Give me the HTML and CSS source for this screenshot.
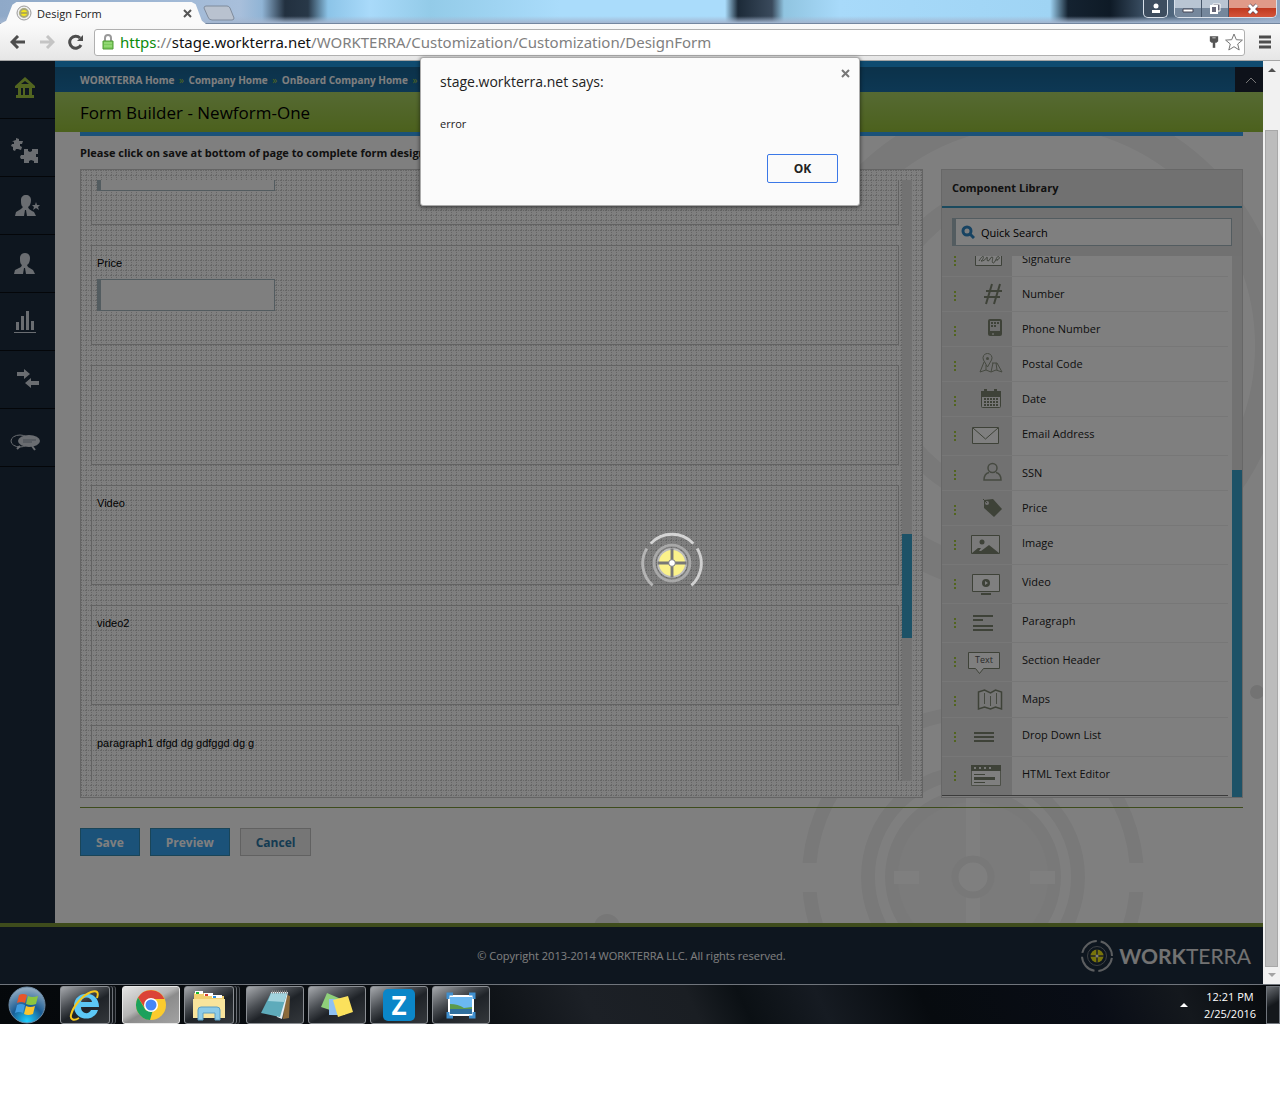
FILE: index.html
```html
<!DOCTYPE html>
<html lang="en">
<head>
    <meta charset="UTF-8">
    <meta name="viewport" content="width=device-width, initial-scale=1.0">
    <title>Design Form</title>
    <link rel="stylesheet" href="styles.css">
</head>
<body>
    <!-- Browser title bar -->
    <div class="titlebar">
        <div class="tab">
            <svg class="favicon" width="16" height="16" viewBox="0 0 16 16">
                <circle cx="8" cy="8" r="7" fill="#eee" stroke="#999" />
                <circle cx="8" cy="8" r="4" fill="#f4e61c" stroke="#a8a87a" stroke-width="2" />
                <path d="M5 8h6" stroke="#777" stroke-width="1" />
            </svg>
            <span class="tab-title">Design Form</span>
            <button class="tab-close" aria-label="Close tab">
                <svg width="9" height="9" viewBox="0 0 9 9"><path d="M1 1l7 7M8 1l-7 7" stroke="#555" stroke-width="2" /></svg>
            </button>
        </div>
        <button class="new-tab" aria-label="New tab">
            <svg width="32" height="16" viewBox="0 0 32 16"><path d="M3 1h21q2 0 3 2l4 10q0 2-2 2H9q-3 0-4-3L1 3q0-2 2-2z" fill="#b9c2cf" stroke="#7f8b9c" /></svg>
        </button>
        <div class="window-buttons">
            <button class="win-btn user" aria-label="User">
                <svg width="12" height="12" viewBox="0 0 12 12"><circle cx="6" cy="3" r="2.5" fill="#fff" /><path d="M2 7h8v3H2z" fill="#fff" /></svg>
            </button>
            <div class="win-group">
                <button class="win-btn" aria-label="Minimize">
                    <svg width="12" height="10" viewBox="0 0 12 10"><path d="M1 5h10v3H1z" fill="#fff" stroke="#445" /></svg>
                </button>
                <button class="win-btn" aria-label="Restore">
                    <svg width="12" height="12" viewBox="0 0 12 12"><path d="M4 1h7v7H4z" fill="#667" stroke="#fff" /><path d="M2 3h6v7H2z" fill="#667" stroke="#fff" stroke-width="2" /></svg>
                </button>
                <button class="win-btn close" aria-label="Close">
                    <svg width="12" height="12" viewBox="0 0 12 12"><path d="M2 2l8 8M10 2l-8 8" stroke="#545" stroke-width="4" /><path d="M2 2l8 8M10 2l-8 8" stroke="#fff" stroke-width="3" /></svg>
                </button>
            </div>
        </div>
    </div>

    <!-- Address bar -->
    <div class="toolbar">
        <button class="tool" aria-label="Back">
            <svg width="16" height="14" viewBox="0 0 16 14"><path d="M15 7H3M8 1L2 7l6 6" fill="none" stroke="#4d4d4d" stroke-width="3" /></svg>
        </button>
        <button class="tool" aria-label="Forward">
            <svg width="16" height="14" viewBox="0 0 16 14"><path d="M1 7h12M8 1l6 6-6 6" fill="none" stroke="#c4c4c4" stroke-width="3" /></svg>
        </button>
        <button class="tool" aria-label="Reload">
            <svg width="16" height="16" viewBox="0 0 16 16"><path d="M13 11a6 6 0 1 1-1-7" fill="none" stroke="#4d4d4d" stroke-width="3" /><path d="M15 1v6H9z" fill="#4d4d4d" /></svg>
        </button>
        <div class="address" role="textbox" aria-label="Address">
            <svg width="12" height="16" viewBox="0 0 12 16"><path d="M3 7V4a3 3 0 0 1 6 0v3" fill="none" stroke="#999" stroke-width="2" /><path d="M1 7h10v8H1z" fill="#7ccb5c" stroke="#4f9a35" /><path d="M2 9h8M2 12h8" stroke="#a5e38a" /></svg>
            <span class="url"><span class="scheme">https</span>://<span class="host">stage.workterra.net</span>/WORKTERRA/Customization/Customization/DesignForm</span>
            <svg width="10" height="14" viewBox="0 0 12 16"><path d="M1 1h10v6l-2 2H3L1 7z" fill="#555" /><path d="M4 3h4" stroke="#ddd" /><path d="M6 8v7" stroke="#555" stroke-width="3" /></svg>
            <svg width="18" height="18" viewBox="0 0 18 18"><path d="M9 1l2.300 5.700 6.100.4-4.700 3.900 1.500 6L9 13.700 3.800 17l1.500-6L.6 7.100l6.100-.4z" fill="#fff" stroke="#777" /></svg>
        </div>
        <button class="tool" aria-label="Menu">
            <svg width="14" height="14" viewBox="0 0 14 14"><path d="M1 2h12M1 7h12M1 12h12" stroke="#4d4d4d" stroke-width="3" /></svg>
        </button>
    </div>

    <div class="viewport">
        <div class="page">
            <div class="layout">
                <nav class="sidebar">
                    <a href="#" aria-label="Home">
                        <svg width="32" height="32" viewBox="0 0 32 32"><path d="M16 3L6 12v2h3v7H7v3h18v-3h-2v-7h3v-2z" fill="#a4cb40" /><path d="M12 14h2v7h-2zM16 14h4v7h-4z" fill="#1c2c3e" /><path d="M12 10l4-3 4 3z" fill="#1c2c3e" /></svg>
                    </a>
                    <a href="#" aria-label="Modules">
                        <svg width="32" height="32" viewBox="0 0 32 32" fill="#d5dbe3"><g transform="translate(0 4)"><path d="M4 5l3-1 0-2 3 1v2l4 0-1 3-2 0 0 2 2 1-1 3-3-1-2 0-1 2-2-1 0-3-2-1 1-2 2 0 0-2-2-1z" /><path d="M15 13h4l0 2 2 1 2-1 0-2h6v5l-2 0v3l2 0v6h-4l0-2-3-1-2 1 0 2h-5v-4l-3 0-1-2 1-2 3 0z" /></g></svg>
                    </a>
                    <a href="#" aria-label="Featured employee">
                        <svg width="32" height="32" viewBox="0 0 32 32" fill="#d5dbe3"><path d="M17 5c3 0 5 2 5 5s-1 6-3 7l1 2 3 2 2 1 2 4H6l1-4 5-3 2-2c-2-1-2-4-2-7s2-5 5-5z" /><path d="M27 12l1 3 3 0-2 2 1 3-3-2-3 2 1-3-2-2 3 0z" /><path d="M16 20l-1 6h3l-1-6z" fill="#1c2c3e" /></svg>
                    </a>
                    <a href="#" aria-label="Employee">
                        <svg width="32" height="32" viewBox="0 0 32 32" fill="#d5dbe3"><path d="M16 5c3 0 5 2 5 5s-1 6-3 7l1 2 5 3 2 4H5l1-4 6-3 1-2c-2-1-2-4-2-7s2-5 5-5z" /><path d="M15 20l-1 6h3l-1-6z" fill="#1c2c3e" /></svg>
                    </a>
                    <a href="#" aria-label="Reports">
                        <svg width="32" height="32" viewBox="0 0 32 32" fill="#d5dbe3"><path d="M7 16h3v8H7zM12 10h3v14h-3zM17 5h3v19h-3zM22 15h3v9h-3zM5 26h22v1H5z" /></svg>
                    </a>
                    <a href="#" aria-label="Transfer">
                        <svg width="32" height="32" viewBox="0 0 32 32" fill="#d5dbe3"><path d="M8 8h7V5l6 5-6 5v-3H8zM30 17h-8v-3l-6 5 6 5v-3h8z" /></svg>
                    </a>
                    <a href="#" aria-label="Chat">
                        <svg width="32" height="32" viewBox="0 0 32 32"><ellipse cx="11" cy="19" rx="9" ry="6" fill="none" stroke="#d5dbe3" /><path d="M11 24l-3 3M23 24l3 4" stroke="#d5dbe3" stroke-width="2" /><ellipse cx="20" cy="19" rx="11" ry="6" fill="#d5dbe3" /><path d="M14 18h13M14 20h9" stroke="#8d98a5" /></svg>
                    </a>
                </nav>

                <main class="main">
                    <svg class="watermark" viewBox="0 0 1208 862" preserveAspectRatio="xMaxYMin slice">
                        <g fill="none" stroke="#f3f3f3">
                            <circle cx="980" cy="285" r="236" stroke-width="32" />
                            <circle cx="980" cy="285" r="160" stroke-width="20" />
                            <circle cx="918" cy="816" r="164" stroke-width="14" />
                            <circle cx="918" cy="816" r="105" stroke-width="14" />
                            <circle cx="918" cy="816" r="81" stroke-width="14" />
                        </g>
                        <circle cx="918" cy="816" r="75" fill="#f6f6f6" />
                        <path d="M911 735h14v127h-14zM740 802h25v29h-25zM1070 802h25v29h-25zM839 810h25v13h-25zM975 810h25v13h-25z" fill="#fff" />
                        <circle cx="918" cy="816" r="18" fill="#fff" stroke="#f0f0f0" stroke-width="7" />
                        <circle cx="552" cy="866" r="13" fill="#eee" />
                        <circle cx="1202" cy="631" r="7" fill="#e6e6e6" />
                    </svg>

                    <div class="breadcrumb-bar">
                        <div class="breadcrumb">
                            <a href="#">WORKTERRA Home</a><span>»</span>
                            <a href="#">Company Home</a><span>»</span>
                            <a href="#">OnBoard Company Home</a><span>»</span>
                            <a href="#">Form Builder</a>
                        </div>
                        <button class="collapse" aria-label="Collapse header">
                            <svg width="12" height="8" viewBox="0 0 12 8"><path d="M1 7l5-5 5 5" fill="none" stroke="#eee" stroke-width="1" /></svg>
                        </button>
                    </div>
                    <h1>Form Builder - Newform-One</h1>

                    <div class="content">
                        <p class="hint">Please click on save at bottom of page to complete form design.</p>

                        <div class="panels">
                            <section class="canvas">
                                <div class="fields">
                                    <div class="field">
                                        <input type="text" aria-label="Number">
                                    </div>
                                    <div class="field">
                                        <label for="price">Price</label>
                                        <input type="text" id="price">
                                    </div>
                                    <div class="field"></div>
                                    <div class="field"><p>Video</p></div>
                                    <div class="field"><p>video2</p></div>
                                    <div class="field"><p>paragraph1 dfgd dg gdfggd dg g</p></div>
                                </div>
                                <div class="track"><div class="thumb canvas-thumb"></div></div>
                            </section>

                            <section class="library">
                                <h2>Component Library</h2>
                                <div class="search">
                                    <svg width="14" height="14" viewBox="0 0 14 14"><circle cx="6" cy="6" r="4" fill="none" stroke="#2f86c4" stroke-width="3" /><path d="M9 9l4 4" stroke="#2f86c4" stroke-width="3" /></svg>
                                    <input type="text" aria-label="Quick Search" value="Quick Search">
                                </div>
                                <div class="list-wrap">
                                    <ul class="components">
                                        <li>
                                            <span class="icon"><i></i><svg viewBox="0 0 36 26"><path d="M8.500 2.500h26v15h-26z" fill="#fff" stroke="#7c8474" /><path d="M12 13c6-10 5-1 2 0 5 0 5-4 6-4s-1 4 1 4 2-4 4-4-1 5 1 6 4-9 6-6-6 3-1 3" fill="none" stroke="#7c8474" /></svg></span>
                                            <span class="name">Signature</span>
                                        </li>
                                        <li>
                                            <span class="icon"><i></i><svg viewBox="0 0 36 26"><path d="M25 1l-6 20M33 1l-6 20M19 8h16M17 14h16" fill="none" stroke="#7c8470" stroke-width="2" /></svg></span>
                                            <span class="name">Number</span>
                                        </li>
                                        <li>
                                            <span class="icon"><i></i><svg viewBox="0 0 36 26"><rect x="21" y="1" width="14" height="17" rx="2" fill="#7c8470" /><path d="M23 3h10v10H23z" fill="#ddd" /><path d="M24 5h2m1 0h2m1 0h2M24 8h2m1 0h2" stroke="#7c8470" stroke-width="2" /><path d="M25 16h2" stroke="#fff" /></svg></span>
                                            <span class="name">Phone Number</span>
                                        </li>
                                        <li>
                                            <span class="icon"><i></i><svg viewBox="0 0 36 26"><path d="M17 9l-4 10 6-2 5 2 5-2 6 2-5-9h-5M19 12v5M26 10l-2 9M29 10l1 7" fill="none" stroke="#8b9280" /><path d="M20.500 14l-4-7a4.500 4.500 0 1 1 8 0z" fill="#e2e2e2" stroke="#8b9280" /><circle cx="20.500" cy="5.500" r="1.500" fill="#8b9280" /></svg></span>
                                            <span class="name">Postal Code</span>
                                        </li>
                                        <li>
                                            <span class="icon"><i></i><svg viewBox="0 0 36 26"><rect x="14.500" y="3.500" width="19" height="16" rx="1" fill="#eee" stroke="#7c8470" /><path d="M14 3h20v6H14zM17 1h3v4h-3zM27 1h3v4h-3z" fill="#7c8470" /><path d="M17 11h14M17 14h14M17 17h14" stroke="#7c8470" stroke-width="2" stroke-dasharray="2 1" /></svg></span>
                                            <span class="name">Date</span>
                                        </li>
                                        <li class="tall">
                                            <span class="icon"><i></i><svg viewBox="0 0 36 26"><path d="M5.500 4.500h26v16h-26z" fill="#fff" stroke="#7c8470" /><path d="M6 5l12.500 11L31 5" fill="none" stroke="#7c8470" /></svg></span>
                                            <span class="name">Email Address</span>
                                        </li>
                                        <li>
                                            <span class="icon"><i></i><svg viewBox="0 0 36 26"><circle cx="25.500" cy="6" r="4.500" fill="none" stroke="#8b9280" stroke-width="1.500" /><path d="M22 10.500c-4 1-5 4-5 7.500h17c0-3.500-1-6.500-5-7.500" fill="none" stroke="#8b9280" stroke-width="1.500" /></svg></span>
                                            <span class="name">SSN</span>
                                        </li>
                                        <li>
                                            <span class="icon"><i></i><svg viewBox="0 0 36 26"><path d="M17 3l9-1 9 10-8 8-10-9z" fill="#7c8470" /><circle cx="20" cy="6" r="2" fill="#e2e2e2" /><path d="M16 2l4 4" stroke="#7c8470" /></svg></span>
                                            <span class="name">Price</span>
                                        </li>
                                        <li class="tall">
                                            <span class="icon"><i></i><svg viewBox="0 0 36 26"><path d="M4.500 3.500h28v18h-28z" fill="#f4f4f4" stroke="#7c8470" /><circle cx="15" cy="10" r="2.500" fill="#7c8470" /><path d="M5 21l6-5 3 0-2 3 2 0 8-6 10 8z" fill="#7c8470" /></svg></span>
                                            <span class="name">Image</span>
                                        </li>
                                        <li class="tall">
                                            <span class="icon"><i></i><svg viewBox="0 0 36 26"><path d="M5.500 3.500h27v17h-27z" fill="#fff" stroke="#7c8470" /><circle cx="19" cy="12" r="4" fill="#7c8470" /><path d="M18 10l3 2-3 2z" fill="#fff" /><path d="M14 23h10" stroke="#7c8470" stroke-width="2" /></svg></span>
                                            <span class="name">Video</span>
                                        </li>
                                        <li class="tall">
                                            <span class="icon"><i></i><svg viewBox="0 0 36 26"><path d="M6 6h20M6 10h10M6 16h20M6 20h20" stroke="#7c8470" stroke-width="2" /></svg></span>
                                            <span class="name">Paragraph</span>
                                        </li>
                                        <li class="tall">
                                            <span class="icon"><i></i><svg viewBox="0 0 36 26"><path d="M1.500 3.500h31v16h-16l-4 5-4-5h-7z" fill="#fff" stroke="#7c8470" /><text x="8" y="14" font-size="9" fill="#555">Text</text></svg></span>
                                            <span class="name">Section Header</span>
                                        </li>
                                        <li class="maps">
                                            <span class="icon"><i></i><svg viewBox="0 0 36 26"><path d="M11.500 4l6-2 6 3 5-3 6 2v17l-6-2-5 2-6-2-6 2z" fill="#ececec" stroke="#7c8470" stroke-width="1.500" /><path d="M17.500 5v11M23.500 8v10M29.500 5v11" stroke="#8b9280" /></svg></span>
                                            <span class="name">Maps</span>
                                        </li>
                                        <li class="tall">
                                            <span class="icon"><i></i><svg viewBox="0 0 36 26"><path d="M7 9h20M7 13h20M7 17h20" stroke="#7c8470" stroke-width="2" /></svg></span>
                                            <span class="name">Drop Down List</span>
                                        </li>
                                        <li class="tall">
                                            <span class="icon"><i></i><svg viewBox="0 0 36 26"><path d="M4.500 2.500h29v20h-29z" fill="#fff" stroke="#9aa090" /><path d="M4 2h30v6H4z" fill="#7c8470" /><path d="M7 5h18" stroke="#eee" stroke-width="2" stroke-dasharray="2 3" /><path d="M7 11.500h11M7 19.500h11" stroke="#7c8470" /><path d="M7 15.500h21" stroke="#7c8470" stroke-width="3" /></svg></span>
                                            <span class="name">HTML Text Editor</span>
                                        </li>
                                    </ul>
                                    <div class="track"><div class="thumb library-thumb"></div></div>
                                </div>
                            </section>
                        </div>

                        <div class="actions">
                            <button class="btn primary">Save</button>
                            <button class="btn primary">Preview</button>
                            <button class="btn">Cancel</button>
                        </div>
                    </div>
                </main>
            </div>

            <footer class="footer">
                <p>© Copyright 2013-2014 WORKTERRA LLC. All rights reserved.</p>
                <div class="brand">
                    <svg width="32" height="32" viewBox="0 0 32 32" fill="none">
                        <circle cx="16" cy="16" r="15" stroke="#b8bcc0" stroke-width="2" stroke-dasharray="20 4" stroke-dashoffset="-2" />
                        <circle cx="16" cy="16" r="9.500" stroke="#7c828a" stroke-width="1" />
                        <circle cx="16" cy="16" r="6.500" fill="#f0e818" />
                        <path d="M16 9v14M9 16h14" stroke="#3c4048" stroke-width="1.500" />
                        <circle cx="16" cy="16" r="1.500" fill="#fff" />
                    </svg>
                    <span><b>WORK</b>TERRA</span>
                </div>
            </footer>

            <div class="overlay">
                <svg class="loader" width="62" height="62" viewBox="0 0 64 64" fill="none">
                    <path d="M10 12a30 30 0 0 1 44 0" stroke="#d4d4d4" stroke-width="3" />
                    <path d="M58 17a30 30 0 0 1-6 38" stroke="#cfcfcf" stroke-width="3" />
                    <path d="M6 17a30 30 0 0 0 6 38" stroke="#b4b4b4" stroke-width="3" />
                    <circle cx="32" cy="32" r="18.500" stroke="#a8a8a8" stroke-width="3" />
                    <circle cx="32" cy="32" r="14.500" fill="#fbf28a" stroke="#bdbdbd" stroke-width="2" />
                    <path d="M32 17v30M17 32h30" stroke="#777" stroke-width="3" />
                    <circle cx="32" cy="32" r="3.500" fill="#fff" stroke="#777" />
                </svg>
            </div>
        </div>

        <div class="page-scroll">
            <svg width="8" height="6" viewBox="0 0 8 6"><path d="M0 5l4-4 4 4z" fill="#505050" /></svg>
            <div class="page-thumb"></div>
            <svg width="8" height="6" viewBox="0 0 8 6"><path d="M0 1l4 4 4-4z" fill="#a3a3a3" /></svg>
        </div>

        <div class="alert" role="alertdialog" aria-labelledby="alert-title">
            <button class="alert-close" aria-label="Close">
                <svg width="9" height="9" viewBox="0 0 9 9"><path d="M1 1l7 7M8 1l-7 7" stroke="#777" stroke-width="2" /></svg>
            </button>
            <div class="alert-title" id="alert-title">stage.workterra.net says:</div>
            <p>error</p>
            <button class="alert-ok">OK</button>
        </div>
    </div>

    <!-- Windows taskbar -->
    <div class="taskbar">
        <button class="start" aria-label="Start">
            <svg width="40" height="38" viewBox="0 0 40 38">
                <defs>
                    <radialGradient id="orb" cx="50%" cy="95%" r="90%"><stop offset="0" stop-color="#1fd0ff" /><stop offset=".5" stop-color="#1a5c94" /><stop offset="1" stop-color="#8fa9c0" /></radialGradient>
                </defs>
                <circle cx="20" cy="19" r="18" fill="url(#orb)" stroke="#6d8ba5" />
                <path d="M12 9q4-2 8 0l-2 8q-4-2-8 0z" fill="#e8562a" />
                <path d="M21 10q4 2 10 0l-2 8q-5 2-10 0z" fill="#8cc63f" />
                <path d="M10 19q4-2 8 0l-2 8q-4-2-8 0z" fill="#3f9be0" />
                <path d="M19 20q4 2 9 0l-2 8q-5 2-9 0z" fill="#fcc52d" />
            </svg>
        </button>
        <button class="task stacked" aria-label="Internet Explorer">
            <svg width="32" height="32" viewBox="0 0 32 32"><path d="M30 18H12c0 7 8 8 10 3h7c-4 13-24 11-24-4C5 1 30 0 30 18zM12 13h11c-1-6-10-6-11 0z" fill="#5cc8f6" fill-rule="evenodd" /><path d="M10 29c-5 3-9 2-8-3C4 17 14 6 22 3c6-2 8 0 6 6" fill="none" stroke="#f6c81d" stroke-width="2" /></svg>
        </button>
        <button class="task active" aria-label="Chrome">
            <svg width="32" height="32" viewBox="0 0 32 32"><circle cx="16" cy="16" r="15" fill="#fbcb2e" /><path d="M3 8.500A15 15 0 0 1 29.500 10H16l-6 9z" fill="#db4437" /><path d="M3 8.500l8 13 7-1-3 10.500A15 15 0 0 1 3 8.500z" fill="#1ba15c" /><circle cx="16" cy="16" r="7" fill="#fff" /><circle cx="16" cy="16" r="5.500" fill="#4486f5" /></svg>
        </button>
        <button class="task stacked" aria-label="Explorer">
            <svg width="34" height="32" viewBox="0 0 34 32"><path d="M2 4h10l2 3h18v22H2z" fill="#f0d070" /><path d="M3 2h8v3H3z" fill="#fff" /><path d="M4 3h3v2H4z" fill="#18b830" /><path d="M12 4h9v3h-9z" fill="#fff" /><path d="M13 5h3v2h-3z" fill="#d84030" /><path d="M20 6h10v3H20z" fill="#fff" /><path d="M21 7h3v2h-3z" fill="#2d8de0" /><path d="M1 10h32v19H1z" fill="#f8e49c" /><path d="M6 31V21q0-3 3-3h16q3 0 3 3v10h-5v-7H11v7z" fill="#8ccbe8" stroke="#5a9fc4" /></svg>
        </button>
        <button class="task" aria-label="Notepad">
            <svg width="32" height="32" viewBox="0 0 32 32"><path d="M26 5l5 2-1 22-6 1z" fill="#8b6a3c" /><path d="M12 3h17l-6 27-5-2z" fill="#e6eef2" /><path d="M12 4h16l-7 24L2 24z" fill="#5eabbb" /><path d="M12 4h16l-3 9-16-1z" fill="#a2d3dd" /><path d="M13 3h15" stroke="#888" stroke-width="3" stroke-dasharray="1 1" /></svg>
        </button>
        <button class="task" aria-label="Sticky Notes">
            <svg width="34" height="30" viewBox="0 0 34 30"><path d="M7 3l14 6-5 13-15-5z" fill="#8fd07a" /><path d="M9 9h16v16H9z" fill="#8fc1f2" /><path d="M13 10l15-4 5 16-15 5z" fill="#fbe15c" /></svg>
        </button>
        <button class="task" aria-label="Zoho">
            <span class="z-tile">Z</span>
        </button>
        <button class="task" aria-label="Snipping Tool">
            <svg width="32" height="28" viewBox="0 0 32 28"><path d="M3 4h26v21H3z" fill="#fff" /><path d="M5 6h22v17H5z" fill="#6bb8f2" /><path d="M5 13q8 0 14 4l8-1v2H5z" fill="#5c9a4c" /><path d="M5 18h22v5H5z" fill="#2f6f9e" /><path d="M3 8V3h5M24 3h5v5M3 21v5h5M24 26h5v-5" fill="none" stroke="#3f8fcf" stroke-width="3" /></svg>
        </button>
        <div class="tray">
            <svg width="8" height="5" viewBox="0 0 8 5"><path d="M0 5l4-4 4 4z" fill="#fff" /></svg>
            <div class="clock">12:21 PM<br>2/25/2016</div>
            <button class="show-desktop" aria-label="Show desktop"></button>
        </div>
    </div>
</body>
</html>
```

FILE: styles.css
```css
* {
    box-sizing: border-box;
}

body {
    margin: 0;
    background: #fff;
    font-family: "Open Sans", "Noto Sans", sans-serif;
    font-size: 11px;
    color: #222;
}

button {
    font-family: inherit;
    padding: 0;
    border: none;
    background: none;
}

svg {
    display: block;
    flex: none;
}

h1, h2, p, ul {
    margin: 0;
    padding: 0;
}

a {
    text-decoration: none;
}

/* Title bar */
.titlebar {
    display: flex;
    align-items: flex-start;
    height: 24px;
    border-bottom: 1px solid #73869f;
    background: linear-gradient(to bottom, rgba(170, 190, 220, 0) 70%, #a3b6d0),
        linear-gradient(to right, #8fa9c8 0, #a8bfdb 240px, #90b4d5 262px, #22303f 285px, #283848 308px, #8cc4e8 328px, #a9dafa 370px, #93cbe8 430px, #aadcfb 560px, #aadcfb 725px, #1c2a38 738px, #3a4a5c 772px, #90c4e0 784px, #a8dafa 840px, #9fd4f4 1050px, #142230 1068px, #0e1a26 1110px, #42586e 1150px, #8aa2be 1270px);
}

.tab {
    display: flex;
    align-items: center;
    width: 206px;
    height: 22px;
    margin-top: 2px;
    padding: 0 14px 0 16px;
    background: #fafafa;
    clip-path: polygon(0 100%, 3% 85%, 6% 12%, 8% 0, 93% 0, 95% 10%, 98% 85%, 100% 100%);
}

.tab-title {
    flex: 1;
    margin-left: 5px;
    font-size: 11px;
}

.new-tab {
    margin: 5px 0 0 -3px;
}

.window-buttons {
    display: flex;
    gap: 6px;
    margin-left: auto;
    padding-right: 3px;
}

.win-group {
    display: flex;
    overflow: hidden;
    border: 1px solid #d8e0ea;
    border-top: none;
    border-radius: 0 0 5px 5px;
}

.win-btn {
    display: flex;
    align-items: center;
    justify-content: center;
    width: 27px;
    height: 17px;
    background: linear-gradient(#b9c5d3 45%, #75879c 50%);
    border-right: 1px solid #46566a;
}

.win-btn.user {
    width: 25px;
    height: 18px;
    border: 1px solid #d8e0ea;
    border-top: none;
    border-radius: 0 0 5px 5px;
    background: #3d4d5f;
}

.win-btn.close {
    width: 47px;
    border-right: none;
    background: linear-gradient(#e09a88 45%, #c03a20 50%, #d4553a);
}

/* Toolbar */
.toolbar {
    display: flex;
    align-items: center;
    gap: 13px;
    height: 37px;
    padding: 0 8px 0 10px;
    background: linear-gradient(#fafafa, #e6e6e6);
    border-bottom: 1px solid #a5a5a5;
}

.address {
    flex: 1;
    display: flex;
    align-items: center;
    gap: 6px;
    height: 27px;
    margin-left: -3px;
    padding: 0 1px 0 7px;
    background: #fff;
    border: 1px solid #b0b0b0;
    border-radius: 3px;
}

.url {
    flex: 1;
    font-family: "Noto Sans", sans-serif;
    font-size: 15px;
    line-height: 20px;
    color: #808080;
}

.scheme {
    color: #0b8b0b;
}

.host {
    color: #111;
}

/* Web page */
.viewport {
    position: relative;
    display: flex;
}

.page {
    position: relative;
    flex: 1;
    min-width: 0;
    background: #fff;
}

.layout {
    display: flex;
}

.sidebar {
    width: 55px;
    background: #1c2c3e;
}

.sidebar a {
    display: flex;
    align-items: center;
    height: 58px;
    padding: 0 9px;
    border-bottom: 1px solid #080c12;
}

.main {
    position: relative;
    flex: 1;
    min-width: 0;
}

.watermark {
    position: absolute;
    inset: 0;
    width: 100%;
    height: 100%;
}

.breadcrumb-bar {
    position: relative;
    display: flex;
    justify-content: space-between;
    height: 31px;
    padding-left: 25px;
    border-top: 6px solid #1e96e0;
    background: linear-gradient(#186494, #1a70a8);
}

.breadcrumb {
    display: flex;
    align-items: center;
    font-size: 10px;
    font-weight: bold;
}

.breadcrumb a {
    color: #fff;
}

.breadcrumb span {
    width: 14px;
    text-align: center;
    font-weight: normal;
    color: #a4cb40;
}

.collapse {
    width: 28px;
    padding-left: 10px;
    background: #1c2434;
}

h1 {
    position: relative;
    height: 40px;
    padding-left: 25px;
    background: linear-gradient(#acd466, #98c23a);
    color: #000;
    font-size: 17px;
    font-weight: normal;
    line-height: 42px;
}

.content {
    position: relative;
    margin: 0 20px 0 25px;
    padding-bottom: 67px;
    border-top: 4px solid #36a4f2;
}

.hint {
    padding: 9px 0 8px;
    font-size: 11px;
    line-height: 16px;
    font-weight: bold;
}

.panels {
    display: flex;
    gap: 18px;
    padding-bottom: 9px;
    border-bottom: 1px solid #7c9838;
}

.canvas {
    flex: 1;
    display: flex;
    padding: 10px;
    border: 1px solid #c8c8c8;
    background: #fff url("data:image/svg+xml,%3Csvg xmlns='http://www.w3.org/2000/svg' width='5' height='5'%3E%3Cpath d='M0 0h1v1H0zM2 0h1v1H2zM0 2h1v1H0zM4 0h1v1H4zM0 4h1v1H0z' fill='%23cccccc'/%3E%3C/svg%3E");
}

.fields {
    flex: 1;
    height: 601px;
    overflow: hidden;
}

.field {
    height: 100px;
    margin-bottom: 20px;
    padding: 10px 5px;
    border: 1px solid #c4c4c4;
    font-family: "Liberation Sans", Arial, sans-serif;
    line-height: 14px;
    color: #000;
}

/* the list is scrolled down, so it starts above the box */
.field:first-child {
    margin-top: -55px;
    padding-top: 24px;
}

.field label {
    display: block;
}

.field input {
    display: block;
    width: 178px;
    height: 32px;
    margin-top: 9px;
    border: 1px solid #a6b8c0;
    border-left-width: 4px;
    background: #fff;
}

.track {
    flex: none;
    width: 10px;
    background: #e4e4e4;
}

.canvas .track {
    height: 601px;
    margin-left: 3px;
}

.thumb {
    background: #3aa4ce;
}

.canvas-thumb {
    height: 104px;
    margin-top: 354px;
}

.library-thumb {
    height: 327px;
    margin-top: 214px;
}

.library {
    width: 302px;
    border: 1px solid #cfcfcf;
    background: #e2e2e2;
}

h2 {
    padding-left: 10px;
    border-bottom: 2px solid #3694bc;
    font-size: 11px;
    line-height: 36px;
}

.search {
    display: flex;
    align-items: center;
    gap: 6px;
    height: 28px;
    margin: 10px;
    padding-left: 5px;
    border: 1px solid #a6b8c0;
    border-left-width: 4px;
    background: #fff;
}

.search input {
    flex: 1;
    min-width: 0;
    padding: 0;
    border: none;
    background: none;
    font-family: inherit;
    font-size: 11px;
    color: #000;
}

.list-wrap {
    display: flex;
    height: 541px;
    overflow: hidden;
    background: #fff;
}

.components {
    flex: 1;
    margin-right: 4px;
    list-style: none;
}

.components li {
    display: flex;
    height: 35px;
    border-bottom: 1px solid #efefef;
    color: #222;
}

.components li:first-child {
    margin-top: -14px;
}

.components li:last-child {
    border-bottom: 1px solid #777;
}

.components li.tall {
    height: 39px;
}

.components li.maps {
    height: 36px;
}

.icon {
    display: flex;
    width: 70px;
    padding: 6px 9px 0 12px;
    background: #e2e2e2;
}

.icon svg {
    width: 36px;
    height: 26px;
    margin-left: auto;
}

.icon i {
    width: 2px;
    height: 10px;
    margin-top: 8px;
    background: repeating-linear-gradient(#a4cb40 0, #a4cb40 2px, transparent 2px, transparent 4px);
}

.name {
    padding: 8px 10px;
    line-height: 18px;
}

.actions {
    display: flex;
    gap: 10px;
    padding-top: 20px;
}

.btn {
    height: 28px;
    padding: 0 15px;
    border: 1px solid #c2c2c2;
    background: #ececec;
    color: #2b76a4;
    font-size: 12px;
    font-weight: bold;
}

.btn.primary {
    background: #36a4f2;
    border-color: #348ab0;
    color: #fff;
}

.footer {
    display: grid;
    grid-template-columns: 1fr auto 1fr;
    align-items: center;
    height: 61px;
    border-top: 4px solid #7c9838;
    background: #1c2c3e;
    color: #fff;
}

.footer p {
    grid-column: 2;
    line-height: 16px;
}

.brand {
    display: flex;
    justify-content: flex-end;
    align-items: center;
    gap: 6px;
    padding-right: 12px;
    font-family: Lato, sans-serif;
    font-size: 21px;
    color: #e4e4e4;
}

.overlay {
    position: absolute;
    inset: 0;
    background: rgba(0, 0, 0, 0.5);
}

.loader {
    position: absolute;
    top: 471px;
    left: 50%;
    margin-left: 9px;
}

.page-scroll {
    display: flex;
    flex-direction: column;
    align-items: center;
    justify-content: space-between;
    width: 17px;
    padding: 6px 2px;
    background: #f1f1f1;
}

.page-thumb {
    flex: 1;
    width: 13px;
    margin: 57px 0 5px;
    border: 1px solid #a8a8a8;
    background: #bcbcbc;
}

/* Alert dialog */
.alert {
    position: absolute;
    top: -4px;
    left: 50%;
    display: flex;
    flex-direction: column;
    width: 440px;
    margin-left: -220px;
    padding: 14px 21px 22px 19px;
    background: #fbfbfb;
    border: 1px solid #ababab;
    border-radius: 3px;
    box-shadow: 0 1px 4px rgba(0, 0, 0, 0.6);
}

.alert-close {
    position: absolute;
    top: 11px;
    right: 9px;
}

.alert-title {
    font-size: 14px;
    line-height: 20px;
}

.alert p {
    margin: 23px 0 21px;
    line-height: 18px;
}

.alert-ok {
    align-self: flex-end;
    width: 71px;
    height: 29px;
    border: 1px solid #3b78e7;
    border-radius: 2px;
    background: #fafafa;
    font-size: 12px;
    font-weight: bold;
    color: #222;
}

/* Taskbar */
.taskbar {
    display: flex;
    align-items: center;
    gap: 4px;
    height: 40px;
    padding-left: 7px;
    border-top: 1px solid #70757c;
    background: linear-gradient(65deg, #05080b 0, #0a0e12 36%, #1c2026 46%, #1a1e23 54%, #0b1014 58%, #161b22 64%, #070b0f 72%, #090d16 85%, #14181d 92%, #05080b 100%);
    color: #fff;
}

.start {
    width: 49px;
}

.task {
    display: flex;
    align-items: center;
    justify-content: center;
    width: 58px;
    height: 38px;
    border: 1px solid #8a8e93;
    border-radius: 3px;
    background: linear-gradient(150deg, #a6a9ad 0, #4a4e53 35%, #1f2328 55%, #33373b 100%);
}

.task.stacked {
    width: 50px;
    margin-right: 8px;
    box-shadow: 2px 0 0 #14181c, 3px 0 0 #6c7076, 5px 0 0 #14181c, 6px 0 0 #4c5056;
}

.task.active {
    background: linear-gradient(150deg, #e4e4e4 0, #b4b4b4 45%, #8c8c8c 55%, #a2a2a2 100%);
    border-color: #e8e8e8;
}

.z-tile {
    width: 32px;
    height: 32px;
    border-radius: 5px;
    background: #0b86c8;
    color: #fff;
    font-size: 26px;
    font-weight: bold;
    line-height: 32px;
}

.tray {
    display: flex;
    align-items: center;
    margin-left: auto;
}

.clock {
    width: 72px;
    margin-left: 6px;
    text-align: center;
    font-size: 11px;
    line-height: 17px;
}

.show-desktop {
    width: 14px;
    height: 38px;
    border: 1px solid #70757c;
    background: linear-gradient(150deg, #6a6e73, #14181c 50%);
}
```
